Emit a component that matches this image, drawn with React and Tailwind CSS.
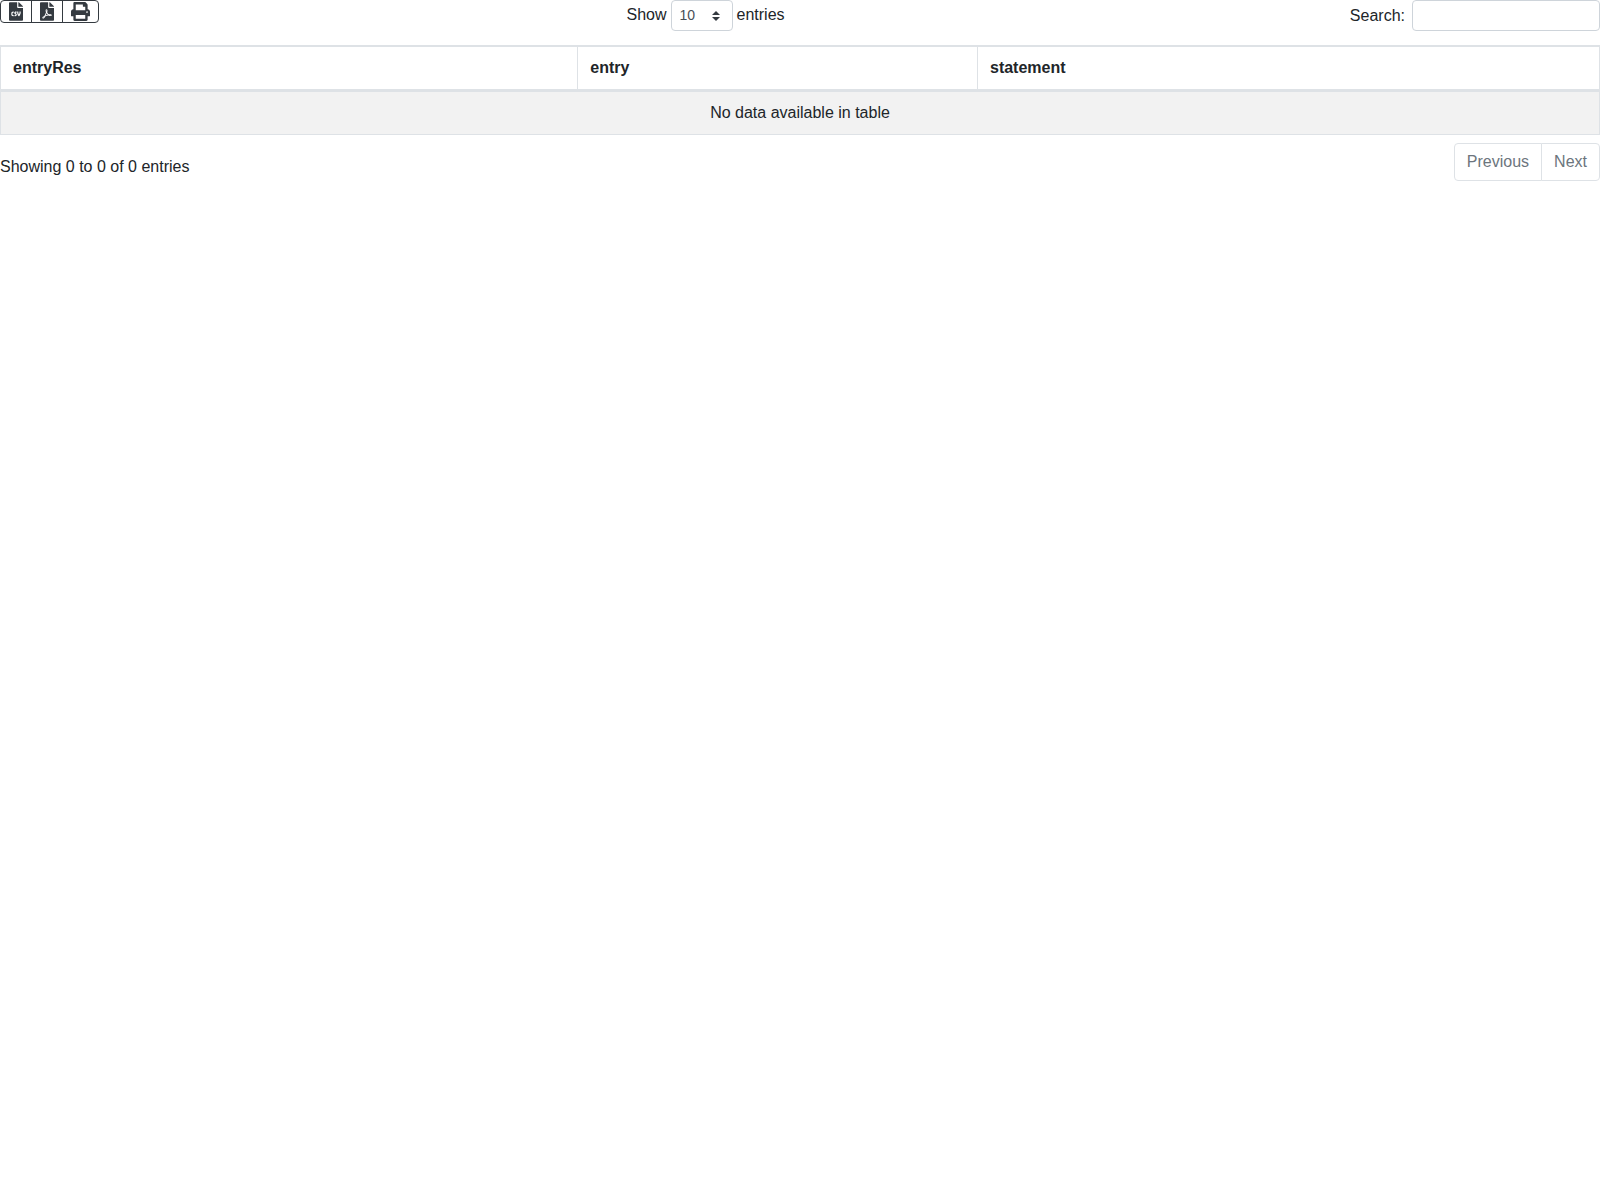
import { useState } from 'react'
import { FaFileCsv, FaFilePdf, FaPrint } from 'react-icons/fa'

const columns = [
  { name: 'entryRes', width: 'w-[36.1%]' },
  { name: 'entry', width: 'w-[25%]' },
  { name: 'statement', width: 'w-[38.9%]' },
]

const exportButtons = [
  { label: 'CSV', icon: FaFileCsv, size: 'h-[19px] w-[14px]' },
  { label: 'PDF', icon: FaFilePdf, size: 'h-[19px] w-[14px]' },
  { label: 'Print', icon: FaPrint, size: 'h-[19px] w-[19px]' },
]

export default function App() {
  const [pageLength, setPageLength] = useState('10')
  const [search, setSearch] = useState('')

  return (
    <div className="font-['Liberation_Sans',Arial,sans-serif] text-base text-[#212529]">
      <div className="flex items-start justify-between mb-3.5">
        <div className="flex">
          {exportButtons.map(({ label, icon: Icon, size }) => (
            <button
              key={label}
              type="button"
              title={label}
              aria-label={label}
              className="flex h-[23px] items-center border border-[#343a40] px-2 pb-px text-[#343a40] -ml-px first:ml-0 first:rounded-l last:rounded-r hover:bg-[#343a40] hover:text-white"
            >
              <Icon className={size} />
            </button>
          ))}
        </div>

        <label className="flex gap-1">
          <span className="leading-[30px]">Show</span>
          <span className="relative">
            <select
              value={pageLength}
              onChange={(e) => setPageLength(e.target.value)}
              className="block h-[31px] w-[62px] appearance-none rounded border border-[#ced4da] bg-white pb-0.5 pl-2 text-sm text-[#495057]"
            >
              <option value="10">10</option>
              <option value="25">25</option>
              <option value="50">50</option>
              <option value="100">100</option>
            </select>
            <svg viewBox="0 0 4 5" className="pointer-events-none absolute right-[13px] top-[11px] h-2.5 w-2" fill="#343a40">
              <path d="M2 0L0 2h4zm0 5L0 3h4z" />
            </svg>
          </span>
          <span className="leading-[30px]">entries</span>
        </label>

        <label className="flex w-72 items-center justify-end gap-[7px]">
          Search:
          <input
            type="search"
            value={search}
            onChange={(e) => setSearch(e.target.value)}
            className="h-[31px] w-[188px] rounded border border-[#ced4da] bg-white px-2 text-sm text-[#495057]"
          />
        </label>
      </div>

      <table className="w-full table-fixed border-separate border-spacing-0 border-r border-[#dee2e6]">
        <thead>
          <tr>
            {columns.map(column => (
              <th
                key={column.name}
                className={`${column.width} border-l border-t-2 border-b-3 border-[#dee2e6] px-3 py-[9px] text-left font-bold leading-6`}
              >
                {column.name}
              </th>
            ))}
          </tr>
        </thead>
        <tbody>
          <tr className="bg-[#f2f2f2]">
            <td colSpan={columns.length} className="border-l border-b border-[#dee2e6] px-3 py-[9px] text-center leading-6">
              No data available in table
            </td>
          </tr>
        </tbody>
      </table>

      <div className="mt-2 flex items-start justify-between">
        <div className="pt-3">Showing 0 to 0 of 0 entries</div>
        <div className="flex text-[#6c757d]">
          <button type="button" disabled className="h-[38px] rounded-l border border-[#dee2e6] bg-white px-3">
            Previous
          </button>
          <button type="button" disabled className="-ml-px h-[38px] rounded-r border border-[#dee2e6] bg-white px-3">
            Next
          </button>
        </div>
      </div>
    </div>
  )
}
